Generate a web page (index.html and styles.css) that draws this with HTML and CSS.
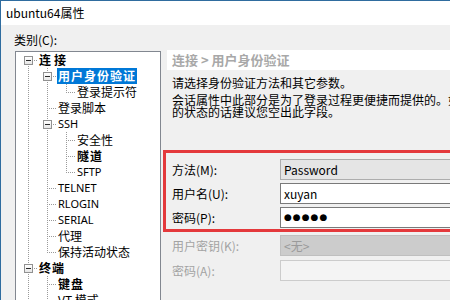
FILE: index.html
```html
<!DOCTYPE html>
<html lang="zh-CN">
<head>
<meta charset="utf-8">
<title>ubuntu64属性</title>
<link rel="stylesheet" href="styles.css">
</head>
<body>
<div class="window">
  <div class="titlebar">ubuntu64属性</div>
  <div class="main">
    <div class="left">
      <div class="cat">类别(C):</div>
      <div class="tree">
        <div class="row"><span class="c first"><span class="box"></span></span><span class="t b wide">连接</span></div>
        <div class="row"><span class="g v"></span><span class="c mid"><span class="box"></span></span><span class="t b sel">用户身份验证</span></div>
        <div class="row"><span class="g v"></span><span class="g v"></span><span class="c last"></span><span class="t">登录提示符</span></div>
        <div class="row"><span class="g v"></span><span class="c mid"></span><span class="t">登录脚本</span></div>
        <div class="row"><span class="g v"></span><span class="c mid"><span class="box"></span></span><span class="t lat">SSH</span></div>
        <div class="row"><span class="g v"></span><span class="g v"></span><span class="c mid"></span><span class="t">安全性</span></div>
        <div class="row"><span class="g v"></span><span class="g v"></span><span class="c mid"></span><span class="t b">隧道</span></div>
        <div class="row"><span class="g v"></span><span class="g v"></span><span class="c last"></span><span class="t lat">SFTP</span></div>
        <div class="row"><span class="g v"></span><span class="c mid"></span><span class="t lat">TELNET</span></div>
        <div class="row"><span class="g v"></span><span class="c mid"></span><span class="t lat">RLOGIN</span></div>
        <div class="row"><span class="g v"></span><span class="c mid"></span><span class="t lat">SERIAL</span></div>
        <div class="row"><span class="g v"></span><span class="c mid"></span><span class="t">代理</span></div>
        <div class="row"><span class="g v"></span><span class="c last"></span><span class="t">保持活动状态</span></div>
        <div class="row"><span class="c mid"><span class="box"></span></span><span class="t b">终端</span></div>
        <div class="row"><span class="g v"></span><span class="c mid"></span><span class="t b">键盘</span></div>
        <div class="row"><span class="g v"></span><span class="c mid"></span><span class="t">VT 模式</span></div>
      </div>
    </div>
    <div class="right">
      <div class="crumb">连接 &gt; 用户身份验证</div>
      <p class="p1">请选择身份验证方法和其它参数。</p>
      <p class="p2">会话属性中此部分是为了登录过程更便捷而提供的。如果您担心安全<br>的状态的话建议您空出此字段。</p>
      <div class="redbox">
        <span class="lbl">方法(M):</span>
        <div class="field combo">Password</div>
        <span class="lbl">用户名(U):</span>
        <div class="field">xuyan</div>
        <span class="lbl">密码(P):</span>
        <div class="field dots">●●●●●</div>
      </div>
      <div class="lower">
        <span class="lbl dis">用户密钥(K):</span>
        <div class="field key">&lt;无&gt;</div>
        <span class="lbl dis">密码(A):</span>
        <div class="field off"></div>
      </div>
    </div>
  </div>
</div>
</body>
</html>
```
FILE: styles.css
```css
html, body {
  margin: 0;
  padding: 0;
}
body {
  width: 450px;
  height: 300px;
  overflow: hidden;
  background: #f0f0f0;
  color: #000;
  font-family: "Noto Sans CJK SC", "Noto Sans", sans-serif;
  font-size: 12px;
}
.window {
  box-sizing: border-box;
  height: 300px;
  border-top: 1px solid #2f6c9f;
  border-left: 1px solid #2f6c9f;
  display: flex;
  flex-direction: column;
}
.titlebar {
  flex: none;
  height: 24px;
  line-height: 24px;
  background: #fff;
  padding-left: 5px;
  white-space: nowrap;
}
.main {
  flex: 1;
  display: flex;
  min-height: 0;
}
.left {
  flex: none;
  box-sizing: border-box;
  width: 162px;
  padding-left: 13px;
}
.cat {
  margin-top: 7px;
  height: 16px;
  line-height: 16px;
}
.tree {
  box-sizing: border-box;
  margin-top: 3px;
  margin-left: 1px;
  width: 146px;
  height: 270px;
  border: 1px solid #828790;
  background: #fff;
  overflow: hidden;
}
.row {
  display: flex;
  height: 16px;
  padding-left: 3px;
}
.g, .c {
  flex: none;
  width: 19px;
  height: 16px;
  display: flex;
  background-repeat: no-repeat;
}
.g.v {
  background-image: repeating-linear-gradient(to bottom, #9a9a9a 0 1px, transparent 1px 2px);
  background-size: 1px 16px;
  background-position: 9px 0;
}
.c {
  background-image:
    repeating-linear-gradient(to bottom, #9a9a9a 0 1px, transparent 1px 2px),
    repeating-linear-gradient(to right, #9a9a9a 0 1px, transparent 1px 2px);
  background-size: 1px 16px, 10px 1px;
  background-position: 9px 0, 9px 8px;
}
.c.last {
  background-size: 1px 9px, 10px 1px;
}
.c.first {
  background-size: 1px 8px, 10px 1px;
  background-position: 9px 8px, 9px 8px;
}
.box {
  box-sizing: border-box;
  width: 9px;
  height: 9px;
  margin: 4px 0 0 5px;
  border: 1px solid #919191;
  background: linear-gradient(#ffffff, #e6e6e6);
  display: flex;
  align-items: center;
  justify-content: center;
}
.box::after {
  content: "";
  width: 5px;
  height: 1px;
  background: #2a2a2a;
}
.t {
  line-height: 16px;
  padding: 0 1px;
  white-space: nowrap;
}
.t.b {
  font-weight: bold;
  letter-spacing: 1px;
}
.t.wide {
  letter-spacing: 3px;
}
.t.sel {
  background: #0078d7;
  color: #fff;
}
.t.lat {
  font-family: "Noto Sans", sans-serif;
  font-size: 11px;
}
.right {
  flex: none;
  width: 420px;
}
.crumb {
  margin: 25px 0 0 4px;
  height: 20px;
  line-height: 20px;
  padding-left: 5px;
  background: #fff;
  color: #a8a8a8;
  font-weight: bold;
  font-size: 13px;
  white-space: nowrap;
}
.p1 {
  margin: 5px 0 0 9px;
  line-height: 16px;
  white-space: nowrap;
}
.p2 {
  margin: 3px 0 0 9px;
  line-height: 12px;
  white-space: nowrap;
}
.redbox {
  margin-top: 32px;
  border: 3px solid #e4393c;
  padding: 6px 0 1px 6px;
  display: grid;
  grid-template-columns: 108px 1fr;
  row-gap: 3px;
  align-items: center;
}
.lower {
  margin-top: 3px;
  padding-left: 9px;
  display: grid;
  grid-template-columns: 108px 1fr;
  row-gap: 4px;
  align-items: center;
}
.lbl {
  white-space: nowrap;
}
.lbl.dis {
  color: #a3a3a3;
}
.field {
  box-sizing: border-box;
  height: 21px;
  line-height: 19px;
  padding-left: 3px;
  border: 1px solid #7a7a7a;
  background: #fff;
  white-space: nowrap;
}
.field.combo {
  background: #e5e5e5;
  border-color: #adadad;
}
.field.dots {
  font-family: "DejaVu Sans", sans-serif;
  font-size: 9px;
  letter-spacing: 1px;
}
.field.key {
  background: #cccccc;
  border-color: #bfbfbf;
  color: #9a9a9a;
}
.field.off {
  background: #f4f4f4;
  border-color: #cccccc;
}
```
